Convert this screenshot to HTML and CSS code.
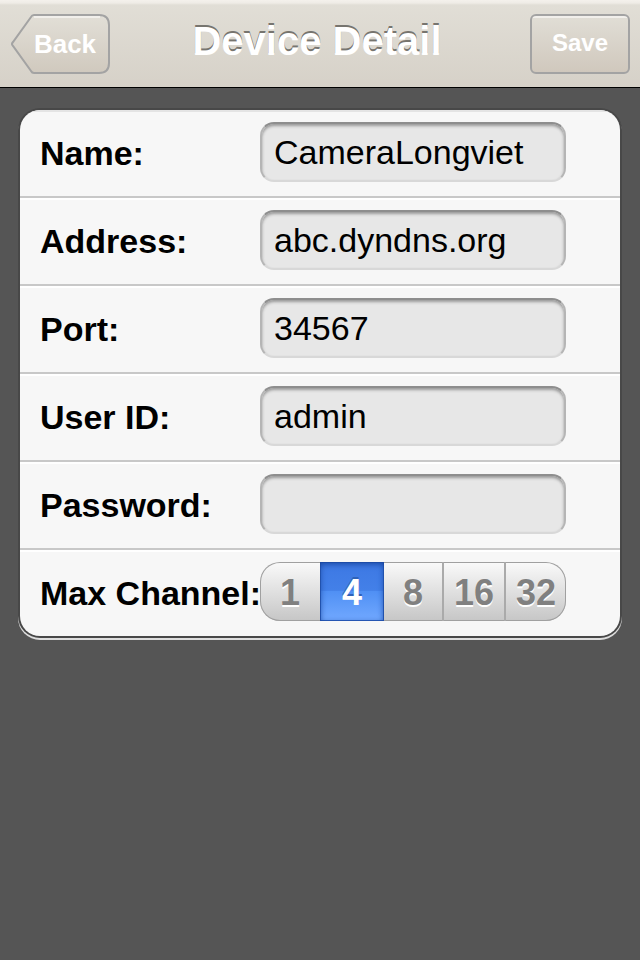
FILE: index.html
```html
<!DOCTYPE html>
<html lang="en">
<head>
<meta charset="utf-8">
<meta name="viewport" content="width=device-width, initial-scale=1">
<title>Device Detail</title>
<link rel="stylesheet" href="styles.css">
</head>
<body>
<header class="navbar">
  <button type="button" class="nav-button back">
    <svg class="back-shape" viewBox="0 0 99 60" aria-hidden="true">
      <defs>
        <linearGradient id="back-fill" x1="0" y1="0" x2="0" y2="1">
          <stop offset="0" stop-color="#e2dfd7"/>
          <stop offset="1" stop-color="#d0c9be"/>
        </linearGradient>
      </defs>
      <path d="M23 1H88Q98 1 98 11V49Q98 59 88 59H23Q21 59 20 57L2 32Q0 30 2 28L20 3Q21 1 23 1Z" fill="url(#back-fill)" stroke="#a3a3a3" stroke-width="2"/>
      <path d="M23 3H89" stroke="#f1efeb" stroke-width="2"/>
    </svg>
    <span class="back-label">Back</span>
  </button>
  <h1 class="title">Device Detail</h1>
  <button type="button" class="nav-button save">Save</button>
</header>
<main class="content">
  <form class="card">
    <div class="row">
      <label class="label" for="name">Name:</label>
      <input class="field" id="name" type="text" value="CameraLongviet">
    </div>
    <div class="row">
      <label class="label" for="address">Address:</label>
      <input class="field" id="address" type="text" value="abc.dyndns.org">
    </div>
    <div class="row">
      <label class="label" for="port">Port:</label>
      <input class="field" id="port" type="text" inputmode="numeric" value="34567">
    </div>
    <div class="row">
      <label class="label" for="user">User ID:</label>
      <input class="field" id="user" type="text" value="admin">
    </div>
    <div class="row">
      <label class="label" for="password">Password:</label>
      <input class="field" id="password" type="password">
    </div>
    <div class="row">
      <span class="label" id="channels">Max Channel:</span>
      <div class="segments" role="radiogroup" aria-labelledby="channels">
        <label class="segment"><input type="radio" name="channel" value="1">1</label>
        <label class="segment"><input type="radio" name="channel" value="4" checked>4</label>
        <label class="segment"><input type="radio" name="channel" value="8">8</label>
        <label class="segment"><input type="radio" name="channel" value="16">16</label>
        <label class="segment"><input type="radio" name="channel" value="32">32</label>
      </div>
    </div>
  </form>
</main>
</body>
</html>
```
FILE: styles.css
```css
* {
  box-sizing: border-box;
}

body {
  margin: 0;
  min-height: 100vh;
  background: #555;
  color: #000;
  font-family: "Liberation Sans", Arial, sans-serif;
}

.navbar {
  display: flex;
  align-items: flex-start;
  height: 88px;
  padding: 14px 10px 0;
  border-bottom: 1px solid #000;
  background: linear-gradient(#f4f1ec 0, #efece6 3px, #e1ded6 5px, #d6d1c8 100%);
}

.nav-button {
  flex: none;
  height: 60px;
  padding: 0;
  color: #fff;
  font-family: inherit;
  font-weight: bold;
}

.back {
  position: relative;
  width: 100px;
  border: 0;
  background: none;
  font-size: 26px;
}

.back-shape {
  position: absolute;
  top: 0;
  right: 0;
  width: 99px;
  height: 60px;
  fill: none;
}

.back-label {
  position: relative;
  padding-left: 10px;
}

.title {
  flex: 1;
  margin: 0;
  padding-right: 6px;
  color: #fff;
  font-size: 40px;
  line-height: 54px;
  text-align: center;
  text-shadow: 0 -2px 0 #77756f;
  white-space: nowrap;
}

.save {
  width: 100px;
  padding-bottom: 2px;
  border: 2px solid #a3a3a3;
  border-radius: 6px;
  background: linear-gradient(#f1efeb 0, #f1efeb 2px, #e0ddd5 2px, #d0c8bd 100%);
  font-size: 24px;
}

.content {
  padding: 22px 20px;
}

.card {
  border-radius: 20px;
  background: #f7f7f7;
  box-shadow: 0 0 0 2px #484848, 0 2px 0 2px #ddd;
  overflow: hidden;
}

.row {
  display: flex;
  align-items: flex-start;
  height: 88px;
  padding: 12px 54px 0 20px;
  border-bottom: 2px solid #c8c8c8;
  box-shadow: inset 0 2px #fff;
}

.row:first-child {
  box-shadow: inset 0 2px #e4e4e4;
}

.row:last-child {
  height: 86px;
  border-bottom: 0;
}

.label {
  flex: none;
  width: 220px;
  font-size: 34px;
  font-weight: bold;
  line-height: 62px;
  white-space: nowrap;
}

.field {
  flex: 1;
  min-width: 0;
  height: 60px;
  padding: 0 12px;
  border: 2px solid #b5b5b5;
  border-top-color: #8e8e8e;
  border-bottom-color: #d8d8d8;
  border-radius: 14px;
  outline: 0;
  background: #e7e7e7;
  box-shadow: inset 0 2px 3px #999;
  color: #000;
  font-family: inherit;
  font-size: 34px;
}

.segments {
  display: grid;
  flex: 1;
  grid-template-columns: 60fr 64fr 60fr 62fr 60fr;
  height: 59px;
  border-radius: 20px;
  background: linear-gradient(#fafafa, #c6c6c6);
  box-shadow: inset 0 0 0 1px #a0a0a0;
  overflow: hidden;
}

.segment {
  display: flex;
  align-items: center;
  justify-content: center;
  padding-top: 2px;
  color: #808080;
  font-size: 36px;
  font-weight: bold;
  text-shadow: 0 2px 0 #fff;
}

.segment:nth-child(3),
.segment:nth-child(4) {
  border-right: 2px solid #aaa;
}

.segment:has(:checked) {
  background: linear-gradient(#3d78e3, #4380e8 48%, #5090f4 50%, #72a9ff);
  box-shadow: inset 0 2px 6px #17459f, inset 0 0 0 1px #2b5cb8;
  color: #fff;
  text-shadow: 0 -2px 0 #2f62b8;
}

.segment input {
  position: absolute;
  appearance: none;
  margin: 0;
  opacity: 0;
}
```
